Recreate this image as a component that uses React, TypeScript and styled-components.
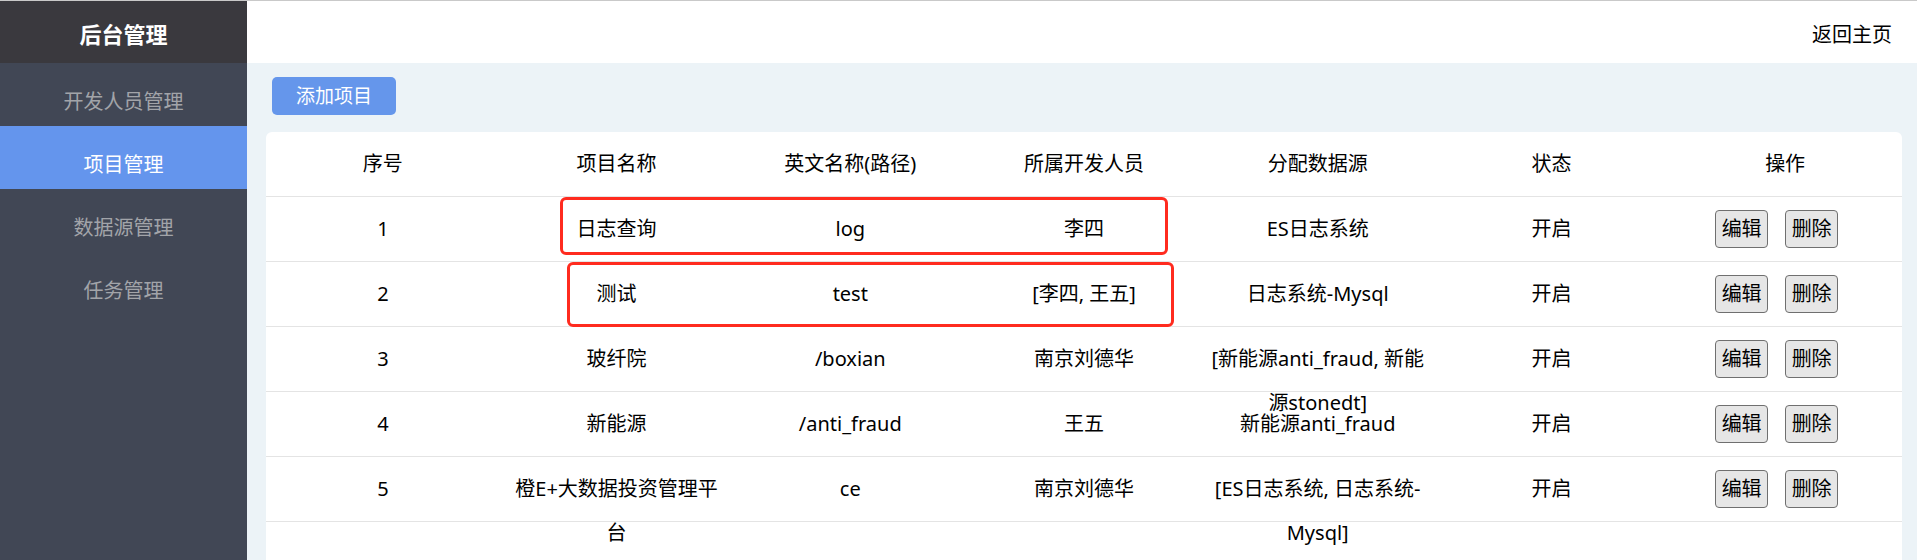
import React from "react";
import styled, { createGlobalStyle } from "styled-components";

const GlobalStyle = createGlobalStyle`
  html, body {
    margin: 0;
    padding: 0;
    height: 100%;
    overflow: hidden;
  }
  #root {
    height: 100%;
  }
  * {
    box-sizing: border-box;
  }
  body {
    font-family: "Noto Sans", "Noto Sans CJK SC", sans-serif;
    color: #000;
  }
`;

const Page = styled.div`
  display: flex;
  height: 100vh;
  border-top: 1px solid #c9c9c9;
`;

const Sidebar = styled.aside`
  width: 247px;
  flex: none;
  display: flex;
  flex-direction: column;
  background: #414755;
`;

const Brand = styled.div`
  height: 62px;
  display: flex;
  align-items: center;
  justify-content: center;
  background: #3a393e;
  color: #fff;
  font-size: 22px;
  font-weight: 700;
  padding-top: 2px;
`;

const MenuItem = styled.div<{ $active?: boolean }>`
  height: 63px;
  display: flex;
  align-items: center;
  justify-content: center;
  padding-top: 14px;
  font-size: 20px;
  line-height: 30px;
  color: ${(p) => (p.$active ? "#ffffff" : "#a2a4a9")};
  background: ${(p) => (p.$active ? "#6495ed" : "transparent")};
`;

const Main = styled.main`
  flex: 1;
  min-width: 0;
  display: flex;
  flex-direction: column;
  background: #ecf3f7;
`;

const TopBar = styled.header`
  height: 62px;
  flex: none;
  display: flex;
  align-items: center;
  justify-content: flex-end;
  padding: 2px 25px 0 0;
  background: #fff;
  font-size: 20px;
`;

const Content = styled.div`
  flex: 1;
  display: flex;
  flex-direction: column;
  padding: 14px 15px 0 19px;
  min-height: 0;
`;

const Toolbar = styled.div`
  display: flex;
  padding-left: 6px;
`;

const PrimaryButton = styled.button`
  height: 38px;
  padding: 0 24px;
  border: none;
  border-radius: 5px;
  background: #6596eb;
  color: #fff;
  font-family: inherit;
  font-size: 19px;
  line-height: 38px;
  cursor: pointer;
`;

const Card = styled.section`
  position: relative;
  flex: 1;
  margin-top: 17px;
  background: #fff;
  border-radius: 6px 6px 0 0;
`;

const Row = styled.div`
  display: grid;
  grid-template-columns: repeat(7, minmax(0, 1fr));
  height: 65px;
  border-bottom: 1px solid #e4e4e4;
`;

const Cell = styled.div`
  height: 64px;
  padding: 10px 8px;
  font-size: 20px;
  line-height: 44px;
  text-align: center;
  overflow: visible;
`;

const ActionCell = styled.div`
  height: 64px;
  display: flex;
  align-items: center;
  justify-content: center;
  padding: 0 8px;
`;

const SmallButton = styled.button`
  height: 38px;
  margin-right: 17px;
  padding: 0 5.5px;
  border: 1px solid #6f6f6f;
  border-radius: 4px;
  background: #e6e6e6;
  color: #000;
  font-family: inherit;
  font-size: 20px;
  line-height: 36px;
  cursor: pointer;
`;

const Annotation = styled.div`
  position: absolute;
  border: 3px solid #ff2b1f;
  border-radius: 6px;
  pointer-events: none;
`;

type Project = {
  id: number;
  name: string;
  path: string;
  owner: string;
  source: string;
  status: string;
};

const projects: Project[] = [
  { id: 1, name: "日志查询", path: "log", owner: "李四", source: "ES日志系统", status: "开启" },
  { id: 2, name: "测试", path: "test", owner: "[李四, 王五]", source: "日志系统-Mysql", status: "开启" },
  { id: 3, name: "玻纤院", path: "/boxian", owner: "南京刘德华", source: "[新能源anti_fraud, 新能源stonedt]", status: "开启" },
  { id: 4, name: "新能源", path: "/anti_fraud", owner: "王五", source: "新能源anti_fraud", status: "开启" },
  { id: 5, name: "橙E+大数据投资管理平台", path: "ce", owner: "南京刘德华", source: "[ES日志系统, 日志系统-Mysql]", status: "开启" },
];

const headers = ["序号", "项目名称", "英文名称(路径)", "所属开发人员", "分配数据源", "状态", "操作"];

const menu = ["开发人员管理", "项目管理", "数据源管理", "任务管理"];

export default function App() {
  return (
    <>
      <GlobalStyle />
      <Page>
        <Sidebar>
          <Brand>后台管理</Brand>
          {menu.map((m) => (
            <MenuItem key={m} $active={m === "项目管理"}>
              {m}
            </MenuItem>
          ))}
        </Sidebar>
        <Main>
          <TopBar>返回主页</TopBar>
          <Content>
            <Toolbar>
              <PrimaryButton>添加项目</PrimaryButton>
            </Toolbar>
            <Card>
              <Row>
                {headers.map((h) => (
                  <Cell key={h}>{h}</Cell>
                ))}
              </Row>
              {projects.map((p) => (
                <Row key={p.id}>
                  <Cell>{p.id}</Cell>
                  <Cell>{p.name}</Cell>
                  <Cell>{p.path}</Cell>
                  <Cell>{p.owner}</Cell>
                  <Cell>{p.source}</Cell>
                  <Cell>{p.status}</Cell>
                  <ActionCell>
                    <SmallButton>编辑</SmallButton>
                    <SmallButton>删除</SmallButton>
                  </ActionCell>
                </Row>
              ))}
              <Annotation style={{ left: 294, top: 65, width: 608, height: 58 }} />
              <Annotation style={{ left: 301, top: 130, width: 607, height: 65 }} />
            </Card>
          </Content>
        </Main>
      </Page>
    </>
  );
}
